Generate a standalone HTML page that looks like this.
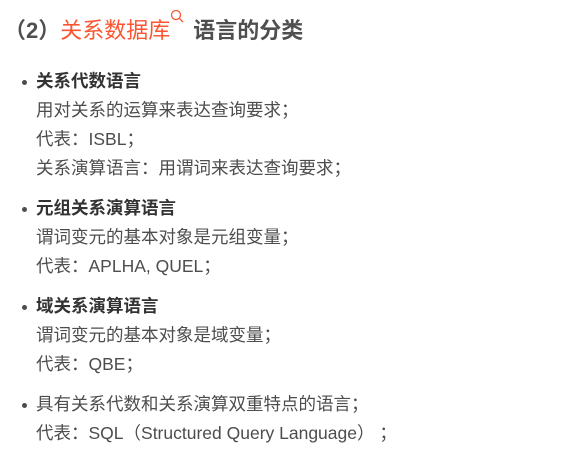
<!DOCTYPE html>
<html><head><meta charset="utf-8"><style>
body{margin:0;background:#fff;font-family:"Liberation Sans","Noto Sans CJK SC",sans-serif;color:#4d4d4d;}
h2{position:absolute;left:4px;top:9px;margin:0;font-size:22px;font-weight:bold;color:#4f4f4f;line-height:32px;white-space:nowrap}
h2 .r{color:#fc5531;font-weight:normal}
ul{position:absolute;left:0;top:67px;margin:0;padding:0 0 0 36px;font-size:17.5px;line-height:29px}
li{margin:0 0 11px 0;list-style:none;position:relative;white-space:nowrap}
li:before{content:"";position:absolute;left:-14px;top:13px;width:5px;height:5px;border-radius:50%;background:#4d4d4d}
b{color:#333}
</style></head><body>
<h2>（2）<span class="r">关系数据库</span><svg width="16" height="16" style="vertical-align:13px;margin-right:7px"><circle cx="6" cy="6" r="4.5" fill="none" stroke="#fc5531" stroke-width="1.3"/><line x1="9.3" y1="9.3" x2="13" y2="13" stroke="#fc5531" stroke-width="1.3"/></svg>语言的分类</h2>
<ul>
<li><b>关系代数语言</b><br>用对关系的运算来表达查询要求；<br>代表：ISBL；<br>关系演算语言：用谓词来表达查询要求；</li>
<li><b>元组关系演算语言</b><br>谓词变元的基本对象是元组变量；<br>代表：APLHA, QUEL；</li>
<li><b>域关系演算语言</b><br>谓词变元的基本对象是域变量；<br>代表：QBE；</li>
<li>具有关系代数和关系演算双重特点的语言；<br>代表：SQL（Structured Query Language） ；</li>
</ul>
</body></html>
